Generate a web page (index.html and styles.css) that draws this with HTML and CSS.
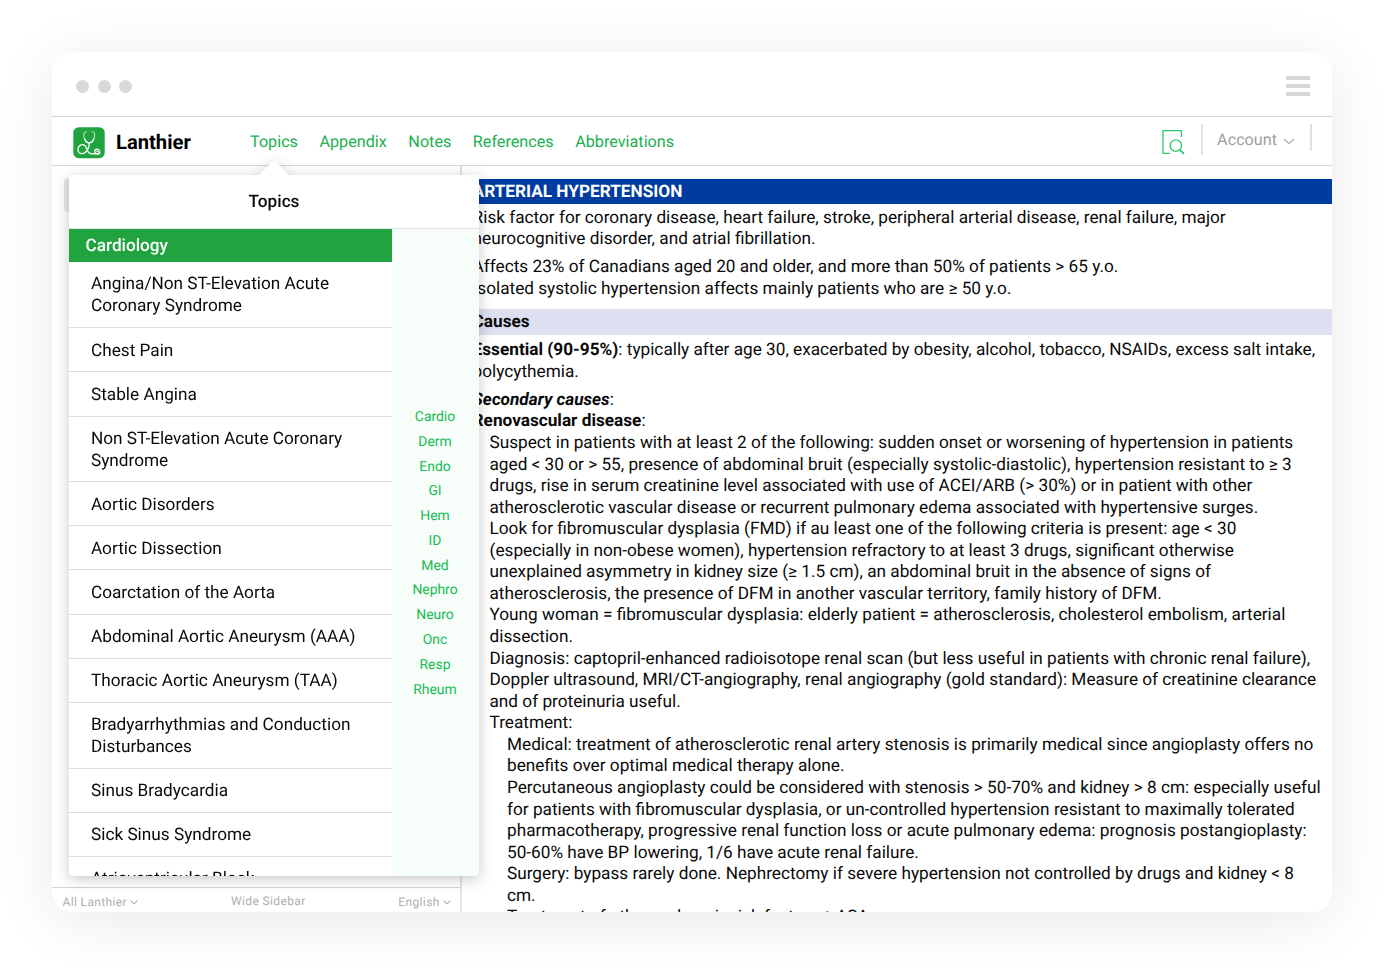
FILE: index.html
```html
<!DOCTYPE html>
<html lang="en">
<head>
<meta charset="utf-8">
<title>Lanthier</title>
<link rel="stylesheet" href="styles.css">
</head>
<body>
<div class="window">
  <div class="titlebar">
    <div class="dots"><span class="dot"></span><span class="dot"></span><span class="dot"></span></div>
    <div class="burger"><span class="bar"></span><span class="bar"></span><span class="bar"></span></div>
  </div>
  <header class="navbar">
    <svg class="logo" viewBox="0 0 32 32" width="32" height="32">
      <rect x="0.3" y="0.2" width="31.4" height="31" rx="5.5" fill="#21a43f"/>
      <g fill="none" stroke="#fff" stroke-linecap="round">
        <path d="M13.2 4.8 L11.8 5 C10.4 6.4 10.6 9.4 11.4 11.4 C12.4 14.6 14.6 15.8 16.2 15.8 C17.8 15.8 20 14.6 21 11.4 C21.8 9.4 22 6.4 20.6 5 L19.2 4.8" stroke-width="1" stroke-opacity=".75"/>
        <path d="M11.6 11.8 C12.6 14.8 14.8 15.9 16.2 15.9 C17.6 15.9 19.8 14.8 20.8 11.8" stroke-width="1.3"/>
        <path d="M16.2 16.2 C16.2 20 14.8 23.2 12.4 25.2 C10 27.3 6.4 27.3 5.3 24.6 C4.1 21.4 6 18 9.2 17.6 C12.2 17.4 13.2 20 14 22.4 C15 25.6 17.2 27.4 20.6 26.8 C22.4 26.4 23.2 27.2 25.2 27 C26.4 26.9 27 26.2 26.8 25" stroke-width="1.3"/>
        <circle cx="24" cy="24.4" r="2.3" stroke-width="1.1"/>
        <circle cx="24" cy="24.4" r="0.6" stroke-width="0.8"/>
      </g>
    </svg>
    <div class="brand">Lanthier</div>
    <nav class="menu">
      <a>Topics</a><a>Appendix</a><a>Notes</a><a>References</a><a>Abbreviations</a>
    </nav>
    <svg class="find" viewBox="0 0 24 26" width="24" height="26" fill="none" stroke="#2fc56d" stroke-width="1.3">
      <path d="M8.8 24.4 H2 V1.6 H20.4 V8"/>
      <circle cx="14.8" cy="16.6" r="5.7"/>
      <path d="M18.8 20.8 L23 24.8" stroke-width="1.7"/>
    </svg>
    <div class="account"><span>Account</span>
      <svg viewBox="0 0 12 7" width="12" height="7"><path d="M1 1.2 L6 5.4 L11 1.2" fill="none" stroke="#aaa" stroke-width="1.2"/></svg>
    </div>
    <div class="divider"></div>
  </header>
  <div class="content">
    <aside class="sidebar">
      <div class="back"></div>
      <footer class="foot">
        <span>All Lanthier <svg viewBox="0 0 8 5" width="8" height="5"><path d="M.6 .7 L4 3.8 L7.4 .7" fill="none" stroke="#aaa" stroke-width="1.1"/></svg></span>
        <span class="wide">Wide Sidebar</span>
        <span>English <svg viewBox="0 0 8 5" width="8" height="5"><path d="M.6 .7 L4 3.8 L7.4 .7" fill="none" stroke="#aaa" stroke-width="1.1"/></svg></span>
      </footer>
    </aside>
    <main class="article">
      <h1>ARTERIAL HYPERTENSION</h1>
      <p class="p1">Risk factor for coronary disease, heart failure, stroke, peripheral arterial disease, renal failure, major<br>neurocognitive disorder, and atrial fibrillation.</p>
      <p class="p2">Affects 23% of Canadians aged 20 and older, and more than 50% of patients &gt; 65 y.o.<br>Isolated systolic hypertension affects mainly patients who are ≥ 50 y.o.</p>
      <h2>Causes</h2>
      <p class="p3"><b>Essential (90-95%)</b>: typically after age 30, exacerbated by obesity, alcohol, tobacco, NSAIDs, excess salt intake,<br>polycythemia.</p>
      <p class="p4"><b><i>Secondary causes</i></b>:<br><b>Renovascular disease</b>:</p>
      <p class="in1">Suspect in patients with at least 2 of the following: sudden onset or worsening of hypertension in patients<br>aged &lt; 30 or &gt; 55, presence of abdominal bruit (especially systolic-diastolic), hypertension resistant to ≥ 3<br>drugs, rise in serum creatinine level associated with use of ACEI/ARB (&gt; 30%) or in patient with other<br>atherosclerotic vascular disease or recurrent pulmonary edema associated with hypertensive surges.<br>Look for fibromuscular dysplasia (FMD) if au least one of the following criteria is present: age &lt; 30<br>(especially in non-obese women), hypertension refractory to at least 3 drugs, significant otherwise<br>unexplained asymmetry in kidney size (≥ 1.5 cm), an abdominal bruit in the absence of signs of<br>atherosclerosis, the presence of DFM in another vascular territory, family history of DFM.<br>Young woman = fibromuscular dysplasia: elderly patient = atherosclerosis, cholesterol embolism, arterial<br>dissection.<br>Diagnosis: captopril-enhanced radioisotope renal scan (but less useful in patients with chronic renal failure),<br>Doppler ultrasound, MRI/CT-angiography, renal angiography (gold standard): Measure of creatinine clearance<br>and of proteinuria useful.<br>Treatment:</p>
      <p class="in2">Medical: treatment of atherosclerotic renal artery stenosis is primarily medical since angioplasty offers no<br>benefits over optimal medical therapy alone.<br>Percutaneous angioplasty could be considered with stenosis &gt; 50-70% and kidney &gt; 8 cm: especially useful<br>for patients with fibromuscular dysplasia, or un-controlled hypertension resistant to maximally tolerated<br>pharmacotherapy, progressive renal function loss or acute pulmonary edema: prognosis postangioplasty:<br>50-60% have BP lowering, 1/6 have acute renal failure.<br>Surgery: bypass rarely done. Nephrectomy if severe hypertension not controlled by drugs and kidney &lt; 8<br>cm.<br>Treatment of atherosclerosis risk factors ± ASA.</p>
    </main>
  </div>
  <section class="popover">
    <svg class="arrow" viewBox="0 0 30 15" width="30" height="15"><path d="M0 15 L13.2 1.4 Q15 0 16.8 1.4 L30 15 Z" fill="#fff"/></svg>
    <div class="panel">
      <div class="ptitle">Topics</div>
      <div class="pbody">
        <div class="list">
          <div class="group">Cardiology</div>
          <div class="item">Angina/Non ST-Elevation Acute<br>Coronary Syndrome</div>
          <div class="item">Chest Pain</div>
          <div class="item">Stable Angina</div>
          <div class="item">Non ST-Elevation Acute Coronary<br>Syndrome</div>
          <div class="item">Aortic Disorders</div>
          <div class="item">Aortic Dissection</div>
          <div class="item">Coarctation of the Aorta</div>
          <div class="item">Abdominal Aortic Aneurysm (AAA)</div>
          <div class="item">Thoracic Aortic Aneurysm (TAA)</div>
          <div class="item">Bradyarrhythmias and Conduction<br>Disturbances</div>
          <div class="item">Sinus Bradycardia</div>
          <div class="item">Sick Sinus Syndrome</div>
          <div class="item">Atrioventricular Block</div>
        </div>
        <div class="index">
          <a>Cardio</a><a>Derm</a><a>Endo</a><a>GI</a><a>Hem</a><a>ID</a><a>Med</a><a>Nephro</a><a>Neuro</a><a>Onc</a><a>Resp</a><a>Rheum</a>
        </div>
      </div>
    </div>
  </section>
</div>
</body>
</html>
```
FILE: styles.css
```css
* { box-sizing: border-box; }
body { margin: 0; padding: 52px; height: 980px; overflow: hidden; background: #fff; font-family: Roboto, "Liberation Sans", sans-serif; color: #0a0a0a; text-rendering: geometricPrecision; }
.window { position: relative; display: flex; flex-direction: column; width: 1280px; height: 860px; border-radius: 20px; background: #fff; box-shadow: 0 8px 60px rgba(0,0,0,.09); }
.titlebar { display: flex; justify-content: space-between; align-items: center; height: 65px; flex: none; padding: 4px 22px 0 24px; border-bottom: 1px solid #d8d8d8; }
.dots { display: flex; gap: 8.5px; }
.dot { width: 13px; height: 13px; border-radius: 50%; background: #d8d8d8; }
.burger { display: flex; flex-direction: column; gap: 4px; width: 24px; }
.bar { height: 4px; background: #d8d8d8; }
.navbar { display: flex; align-items: center; height: 49px; flex: none; border-bottom: 1px solid #d8d8d8; white-space: nowrap; }
.logo { margin: 3px 0 0 21px; }
.brand { width: 134px; margin: 2px 0 0 11px; font-size: 20.2px; font-weight: 700; color: #000; }
.menu { display: flex; gap: 21.5px; font-size: 16.2px; color: #21b050; }
.find { margin: 1px 0 0 auto; }
.account { display: flex; align-items: center; gap: 6px; height: 31px; margin: -3px 0 0 15.5px; padding: 0 15px 0 14.6px; border-left: 2px solid #e4e4e4; font-size: 16.2px; color: #a0a0a0; }
.account svg { margin-top: 3px; }
.divider { width: 2px; height: 27px; margin: -7px 20px 0 0; background: #e0e0e0; }
.content { display: flex; flex: 1; min-height: 0; overflow: hidden; border-radius: 0 0 20px 20px; }
.sidebar { display: flex; flex-direction: column; justify-content: space-between; width: 410px; flex: none; border-right: 2px solid #e2e2e2; padding-top: 12px; }
.back { width: 60px; height: 34px; margin-left: 12px; border-radius: 4px; background: #e8e8e8; }
.foot { display: flex; justify-content: space-between; height: 25px; border-top: 1px solid #d4d4d4; padding: 6px 9px 0 10.5px; font-size: 12px; line-height: 16px; letter-spacing: .36px; color: #b0b0b0; }
.foot svg { margin-bottom: 1px; }
.wide { margin-top: -1px; }
.article { flex: 1; padding-top: 12.7px; overflow: hidden; font-size: 17.22px; line-height: 21.56px; white-space: nowrap; }
.article h1, .article h2 { height: 25.6px; margin: 0; padding: 1px 0 0 10.6px; font-size: inherit; line-height: 25.6px; font-weight: 700; }
.article h1 { background: #003ca0; color: #fff; }
.article h2 { background: #dde0f0; margin-top: 8.6px; }
.article p { margin: 0; padding-left: 10.6px; }
.article .p1 { margin-top: 3.4px; }
.article .p2 { margin-top: 6.6px; }
.article .p3 { margin-top: 5.4px; }
.article .p4 { margin-top: 6.6px; }
.article .in1 { padding-left: 27.5px; }
.article .in2 { padding-left: 45px; }
.popover { position: absolute; left: 17px; top: 108px; width: 410px; filter: drop-shadow(0 3px 7px rgba(0,0,0,.22)); }
.arrow { display: block; margin-left: 190px; }
.panel { display: flex; flex-direction: column; height: 701px; overflow: hidden; border-radius: 3px; background: #fff; }
.ptitle { height: 54px; flex: none; padding-top: 1px; border-bottom: 1px solid #e2e2e2; text-align: center; font-size: 17.2px; font-weight: 500; line-height: 53px; }
.pbody { display: flex; flex: 1; min-height: 0; }
.list { width: 323px; overflow: hidden; font-size: 17.22px; line-height: 21.6px; }
.group { height: 33px; padding: 1px 0 0 16.5px; background: #21a43f; color: #fff; font-weight: 500; line-height: 32.5px; }
.item { padding: 12.4px 0 9.15px 22px; border-bottom: 1px solid #dedede; white-space: nowrap; }
.item:nth-child(2) { padding-bottom: 9.7px; }
.index { display: flex; flex: 1; flex-direction: column; justify-content: center; padding: 2.4px 1px 0 0; background: #f7fdf9; text-align: center; font-size: 13.9px; line-height: 24.77px; color: #16bb56; }
```
